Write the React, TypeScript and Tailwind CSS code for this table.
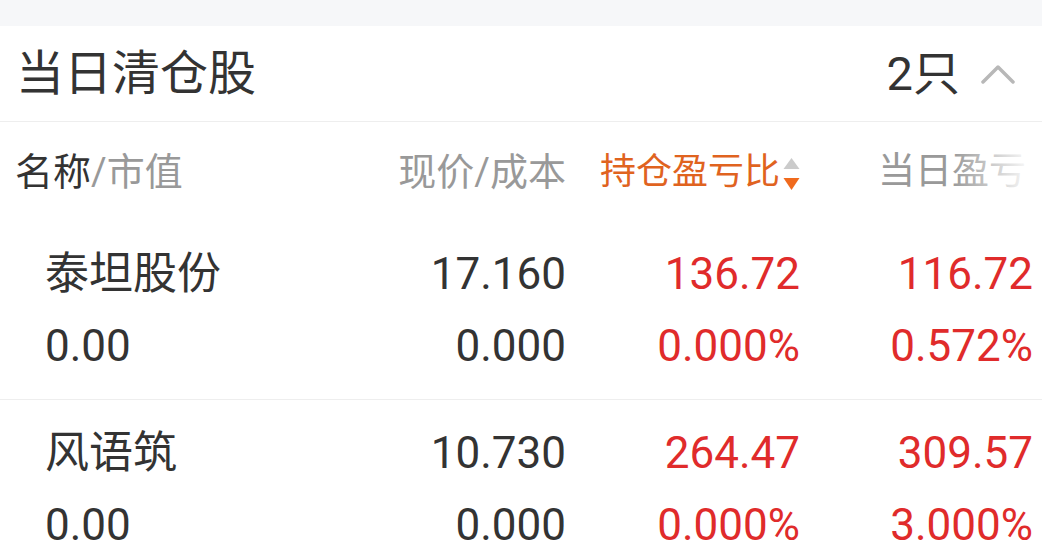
const font = "font-['Roboto','Noto_Sans_CJK_SC',sans-serif]";

type Row = {
	name: string;
	value: string;
	price: string;
	cost: string;
	ratio: string;
	ratioPct: string;
	day: string;
	dayPct: string;
};

const rows: Row[] = [
	{
		name: "泰坦股份",
		value: "0.00",
		price: "17.160",
		cost: "0.000",
		ratio: "136.72",
		ratioPct: "0.000%",
		day: "116.72",
		dayPct: "0.572%",
	},
	{
		name: "风语筑",
		value: "0.00",
		price: "10.730",
		cost: "0.000",
		ratio: "264.47",
		ratioPct: "0.000%",
		day: "309.57",
		dayPct: "3.000%",
	},
];

function SortArrows() {
	return (
		<svg width="17" height="34" viewBox="0 0 17 34" className="ml-[3px] mt-[6px]">
			<path d="M8.5 0 L16.5 11 L0.5 11 Z" fill="#cbcbcb" />
			<path d="M0.5 20 L16.5 20 L8.5 32 Z" fill="#f06a1d" />
		</svg>
	);
}

export default function App() {
	return (
		<div className={`w-[1042px] h-[559px] overflow-hidden bg-white ${font}`}>
			<div className="h-[26px] bg-[#f6f7f9]" />

			<div className="h-[96px] flex items-center justify-between pl-[16px] pr-[27px] border-b border-[#eeeeee]">
				<span className="text-[48px] leading-none text-[#333333]">当日清仓股</span>
				<div className="flex items-center">
					<span className="text-[47px] leading-none text-[#333333]">2只</span>
					<svg width="34" height="22" viewBox="0 0 34 22" className="ml-[21px]">
						<path
							d="M2 19 L17 4 L32 19"
							fill="none"
							stroke="#b8b8b8"
							strokeWidth="3.5"
							strokeLinecap="round"
							strokeLinejoin="round"
						/>
					</svg>
				</div>
			</div>

			<div className="relative h-[99px] grid grid-cols-[1fr_220px_234px_233px] items-center pr-[9px] leading-none">
				<div className="pl-[15px] text-[38px]">
					<span className="text-[#333333]">名称</span>
					<span className="text-[#999999]">/市值</span>
				</div>
				<div className="text-right text-[38px] text-[#999999]">现价/成本</div>
				<div className="flex justify-end items-center text-[36px] text-[#e0631f]">
					<span>持仓盈亏比</span>
					<SortArrows />
				</div>
				<div className="pl-[78px] text-[37px] text-[#999999] whitespace-nowrap">当日盈亏</div>
				<div className="absolute right-0 top-0 h-full w-[90px] bg-gradient-to-l from-white from-10% to-transparent" />
			</div>

			{rows.map((r) => (
				<div
					key={r.name}
					className="grid grid-cols-[1fr_220px_234px_233px] pr-[9px] pt-[17px] pb-[17px] border-b border-[#eeeeee] text-[44px] leading-[72px]"
				>
					<div className="pl-[45px] text-[#333333]">
						<div>{r.name}</div>
						<div>{r.value}</div>
					</div>
					<div className="text-right text-[#333333]">
						<div>{r.price}</div>
						<div>{r.cost}</div>
					</div>
					<div className="text-right text-[#e02b2b]">
						<div>{r.ratio}</div>
						<div>{r.ratioPct}</div>
					</div>
					<div className="text-right text-[#e02b2b]">
						<div>{r.day}</div>
						<div>{r.dayPct}</div>
					</div>
				</div>
			))}
		</div>
	);
}
